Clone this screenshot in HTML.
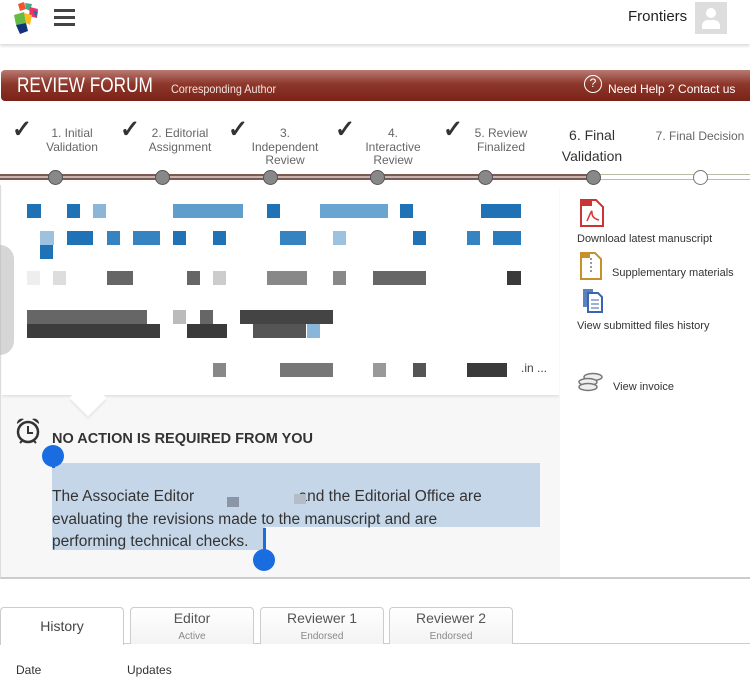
<!DOCTYPE html>
<html><head><meta charset="utf-8"><style>
*{margin:0;padding:0;box-sizing:border-box}
body{width:750px;height:668px;overflow:hidden;background:#fff;font-family:"Liberation Sans",sans-serif;color:#444;position:relative}
.a{position:absolute}
.b{position:absolute;height:14px}
.step{position:absolute;font-size:12px;color:#666;text-align:center;line-height:13.5px}
.chk{position:absolute;font-size:24px;color:#333;top:115px;font-weight:bold}
.dot{position:absolute;top:170px;width:15px;height:15px;border-radius:50%;background:#888;border:1.5px solid #555}
.tab{position:absolute;top:607px;height:37px;border:1px solid #ccc;border-bottom:none;border-radius:4px 4px 0 0;background:linear-gradient(#fff,#f3f3f3);text-align:center;font-size:14px;color:#555;line-height:17px;padding-top:2px}
.tab small{display:block;font-size:10px;color:#888;margin-top:1px}
.side{position:absolute;font-size:11px;color:#333}
</style></head><body>
<div class="a" style="left:0;top:0;width:750px;height:44px;box-shadow:0 2px 3px rgba(0,0,0,.15)"></div>
<svg class="a" style="left:10px;top:1px" width="34" height="34" viewBox="0 0 34 34">
<polygon points="8,3 14,1 16,8 10,10" fill="#e53"/><polygon points="15,2 22,3 20,10 16,8" fill="#4a8"/>
<polygon points="20,6 28,8 27,17 19,15" fill="#e36"/><polygon points="23,9 28,11 26,17" fill="#36a"/>
<polygon points="4,14 14,11 16,22 6,24" fill="#6b4"/><polygon points="14,12 22,14 20,24 16,22" fill="#fb2"/>
<polygon points="6,24 16,22 18,30 10,33" fill="#137"/>
</svg>
<div class="a" style="left:54px;top:9px;width:21px;height:3px;background:#444"></div>
<div class="a" style="left:54px;top:16px;width:21px;height:3px;background:#444"></div>
<div class="a" style="left:54px;top:23px;width:21px;height:3px;background:#444"></div>
<div class="a" style="left:628px;top:8px;font-size:15px;color:#222">Frontiers</div>
<div class="a" style="left:695px;top:2px;width:32px;height:32px;background:#ddd"></div>
<div class="a" style="left:706px;top:8px;width:10px;height:10px;border-radius:50%;background:#fff"></div>
<div class="a" style="left:702px;top:20px;width:18px;height:9px;border-radius:6px 6px 0 0;background:#fff"></div>
<div class="a" style="left:1px;top:70px;width:749px;height:31px;border-radius:4px 0 0 4px;background:linear-gradient(#b87a72,#8e372b 45%,#7a2217)"></div>
<div class="a" style="left:17px;top:74px;font-size:21px;color:#fff;transform:scaleX(.82);transform-origin:0 0;white-space:nowrap">REVIEW FORUM</div>
<div class="a" style="left:171px;top:82px;font-size:12px;color:#f4e4e0;transform:scaleX(.9);transform-origin:0 0;white-space:nowrap">Corresponding Author</div>
<div class="a" style="left:584px;top:75px;width:18px;height:18px;border:1.5px solid #fff;border-radius:50%;color:#fff;font-size:12px;text-align:center;line-height:15px">?</div>
<div class="a" style="left:608px;top:82px;font-size:12px;color:#fff;white-space:nowrap">Need Help ? Contact us</div>
<div class="chk" style="left:12px">✓</div><div class="chk" style="left:120px">✓</div><div class="chk" style="left:228px">✓</div><div class="chk" style="left:335px">✓</div><div class="chk" style="left:443px">✓</div>
<div class="step" style="left:36px;top:127px;width:72px">1. Initial<br>Validation</div>
<div class="step" style="left:138px;top:127px;width:84px">2. Editorial<br>Assignment</div>
<div class="step" style="left:243px;top:127px;width:84px">3.<br>Independent<br>Review</div>
<div class="step" style="left:353px;top:127px;width:80px">4.<br>Interactive<br>Review</div>
<div class="step" style="left:463px;top:127px;width:76px">5. Review<br>Finalized</div>
<div class="step" style="left:552px;top:125px;width:80px;font-size:14px;line-height:21px;color:#333">6. Final<br>Validation</div>
<div class="step" style="left:650px;top:130px;width:100px">7. Final Decision</div>
<div class="a" style="left:0;top:174px;width:593px;height:6px;border-top:2px solid #7a5a52;border-bottom:2px solid #7a5a52;background:#c9b5b0"></div>
<div class="a" style="left:593px;top:174px;width:157px;height:6px;border-top:1px solid #bba;border-bottom:1px solid #bba"></div>
<div class="dot" style="left:48px"></div><div class="dot" style="left:155px"></div><div class="dot" style="left:263px"></div><div class="dot" style="left:370px"></div><div class="dot" style="left:478px"></div><div class="dot" style="left:586px"></div>
<div class="dot" style="left:693px;background:#fff;border-color:#777"></div>
<div class="a" style="left:0;top:185px;width:750px;height:394px;border-bottom:2px solid #ccc;border-left:1px solid #ddd"></div>
<div class="a" style="left:1px;top:395px;width:559px;height:182px;background:#f7f7f7"></div>
<div class="a" style="left:2px;top:185px;width:557px;height:210px;background:#fff;box-shadow:0 2px 2px rgba(0,0,0,.08)"></div>
<div class="a" style="left:75px;top:385px;width:26px;height:26px;background:#fff;transform:rotate(45deg);box-shadow:2px 2px 2px rgba(0,0,0,.06)"></div>
<div class="a" style="left:0;top:245px;width:14px;height:110px;border-radius:0 40px 40px 0;background:#bbb;opacity:.6"></div>
<div class="b" style="left:27px;top:204px;width:14px;background:#1f72b5"></div><div class="b" style="left:67px;top:204px;width:13px;background:#1f72b5"></div><div class="b" style="left:93px;top:204px;width:13px;background:#8ab6da"></div>
<div class="b" style="left:173px;top:204px;width:70px;background:#5f9ecc"></div><div class="b" style="left:267px;top:204px;width:13px;background:#1f72b5"></div><div class="b" style="left:320px;top:204px;width:68px;background:#6aa4d0"></div><div class="b" style="left:400px;top:204px;width:13px;background:#1f72b5"></div><div class="b" style="left:481px;top:204px;width:40px;background:#1f72b5"></div>
<div class="b" style="left:40px;top:231px;width:14px;background:#9cc2e0"></div><div class="b" style="left:67px;top:231px;width:26px;background:#1f72b5"></div><div class="b" style="left:107px;top:231px;width:13px;background:#3583c0"></div><div class="b" style="left:133px;top:231px;width:27px;background:#3583c0"></div><div class="b" style="left:173px;top:231px;width:13px;background:#1f72b5"></div><div class="b" style="left:213px;top:231px;width:13px;background:#1f72b5"></div><div class="b" style="left:280px;top:231px;width:26px;background:#3583c0"></div><div class="b" style="left:333px;top:231px;width:13px;background:#9cc2e0"></div><div class="b" style="left:413px;top:231px;width:13px;background:#1f72b5"></div><div class="b" style="left:467px;top:231px;width:13px;background:#3583c0"></div><div class="b" style="left:493px;top:231px;width:28px;background:#2a7bbd"></div>
<div class="b" style="left:40px;top:245px;width:13px;background:#1f72b5"></div>
<div class="b" style="left:107px;top:271px;width:26px;background:#666"></div><div class="b" style="left:187px;top:271px;width:13px;background:#666"></div><div class="b" style="left:213px;top:271px;width:13px;background:#ccc"></div><div class="b" style="left:267px;top:271px;width:40px;background:#888"></div><div class="b" style="left:333px;top:271px;width:13px;background:#888"></div><div class="b" style="left:373px;top:271px;width:53px;background:#666"></div><div class="b" style="left:507px;top:271px;width:14px;background:#3a3a3a"></div><div class="b" style="left:27px;top:271px;width:13px;background:#eee"></div><div class="b" style="left:53px;top:271px;width:13px;background:#ddd"></div>
<div class="b" style="left:27px;top:310px;width:120px;background:#666"></div><div class="b" style="left:173px;top:310px;width:13px;background:#bbb"></div><div class="b" style="left:200px;top:310px;width:13px;background:#666"></div><div class="b" style="left:240px;top:310px;width:93px;background:#444"></div>
<div class="b" style="left:27px;top:324px;width:133px;background:#3c3c3c"></div><div class="b" style="left:187px;top:324px;width:40px;background:#3a3a3a"></div><div class="b" style="left:253px;top:324px;width:53px;background:#555"></div><div class="b" style="left:307px;top:324px;width:13px;background:#8ab6da"></div>
<div class="b" style="left:213px;top:363px;width:13px;background:#888"></div><div class="b" style="left:280px;top:363px;width:53px;background:#777"></div><div class="b" style="left:373px;top:363px;width:13px;background:#999"></div><div class="b" style="left:413px;top:363px;width:13px;background:#555"></div><div class="b" style="left:467px;top:363px;width:40px;background:#3a3a3a"></div>
<div class="a" style="left:521px;top:361px;font-size:12px;color:#444">.in ...</div>
<svg class="a" style="left:579px;top:199px" width="26" height="28"><path d="M2 1h15l7 7v19H2z" fill="#fff" stroke="#c33" stroke-width="2"/><rect x="1" y="1" width="12" height="6" fill="#c33"/><path d="M8 22c4-9 5-12 5-8s3 6 7 7" fill="none" stroke="#d33" stroke-width="1.5"/></svg>
<div class="side" style="left:577px;top:233px">Download latest manuscript</div>
<svg class="a" style="left:579px;top:252px" width="24" height="28"><path d="M2 1h14l6 6v20H2z" fill="#fff" stroke="#c8902a" stroke-width="2"/><rect x="1" y="1" width="10" height="5" fill="#c8902a"/><path d="M12 6v14" stroke="#999" stroke-width="2" stroke-dasharray="2 2"/></svg>
<div class="side" style="left:612px;top:267px">Supplementary materials</div>
<svg class="a" style="left:581px;top:286px" width="24" height="28"><path d="M2 3h10v18H2z" fill="#5a82c2"/><path d="M7 7h10l4 4v15H7z" fill="#fff" stroke="#3b65ad" stroke-width="2"/><path d="M10 14h8M10 18h8M10 22h8" stroke="#3b65ad"/></svg>
<div class="side" style="left:577px;top:320px">View submitted files history</div>
<svg class="a" style="left:577px;top:371px" width="28" height="22"><g fill="#eee" stroke="#777" stroke-width="1.5"><ellipse cx="16" cy="6" rx="9" ry="3.5"/><ellipse cx="11" cy="11" rx="9" ry="3.5"/><ellipse cx="11" cy="16" rx="9" ry="3.5"/></g></svg>
<div class="side" style="left:613px;top:381px">View invoice</div>
<svg class="a" style="left:14px;top:416px" width="28" height="30"><circle cx="14" cy="16" r="10" fill="none" stroke="#333" stroke-width="2.5"/><path d="M14 10v7h5" fill="none" stroke="#333" stroke-width="2"/><path d="M3 8a5 5 0 0 1 7-5zM25 8a5 5 0 0 0-7-5z" fill="#333"/><path d="M6 27l3-3M22 27l-3-3" stroke="#333" stroke-width="2"/></svg>
<div class="a" style="left:52px;top:431px;font-size:14.5px;font-weight:bold;color:#333">NO ACTION IS REQUIRED FROM YOU</div>
<div class="a" style="left:52px;top:463px;width:488px;height:64px;background:#c5d6e8"></div>
<div class="a" style="left:52px;top:527px;width:213px;height:23px;background:#c5d6e8"></div>
<div class="a" style="left:52px;top:486px;width:462px;font-size:15.5px;line-height:22.5px;color:#333">The Associate Editor <span style="display:inline-block;width:100px"></span>and the Editorial Office are evaluating the revisions made to the manuscript and are performing technical checks.</div>
<div class="a" style="left:227px;top:497px;width:12px;height:10px;background:#8a96a6"></div>
<div class="a" style="left:294px;top:494px;width:12px;height:10px;background:#b4bcc8"></div>
<div class="a" style="left:42px;top:445px;width:22px;height:22px;border-radius:50%;background:#1a6de0"></div>
<div class="a" style="left:52px;top:460px;width:3px;height:8px;background:#1a6de0"></div>
<div class="a" style="left:263px;top:528px;width:3px;height:24px;background:#1a6de0"></div>
<div class="a" style="left:253px;top:549px;width:22px;height:22px;border-radius:50%;background:#1a6de0"></div>
<div class="a" style="left:0;top:643px;width:750px;height:1px;background:#ccc"></div>
<div class="tab" style="left:0;width:124px;background:#fff;height:38px;padding-top:10px;color:#444">History</div>
<div class="tab" style="left:130px;width:124px">Editor<small>Active</small></div>
<div class="tab" style="left:260px;width:124px">Reviewer 1<small>Endorsed</small></div>
<div class="tab" style="left:389px;width:124px">Reviewer 2<small>Endorsed</small></div>
<div class="a" style="left:16px;top:663px;font-size:12px;color:#333">Date</div>
<div class="a" style="left:127px;top:663px;font-size:12px;color:#333">Updates</div>
</body></html>
